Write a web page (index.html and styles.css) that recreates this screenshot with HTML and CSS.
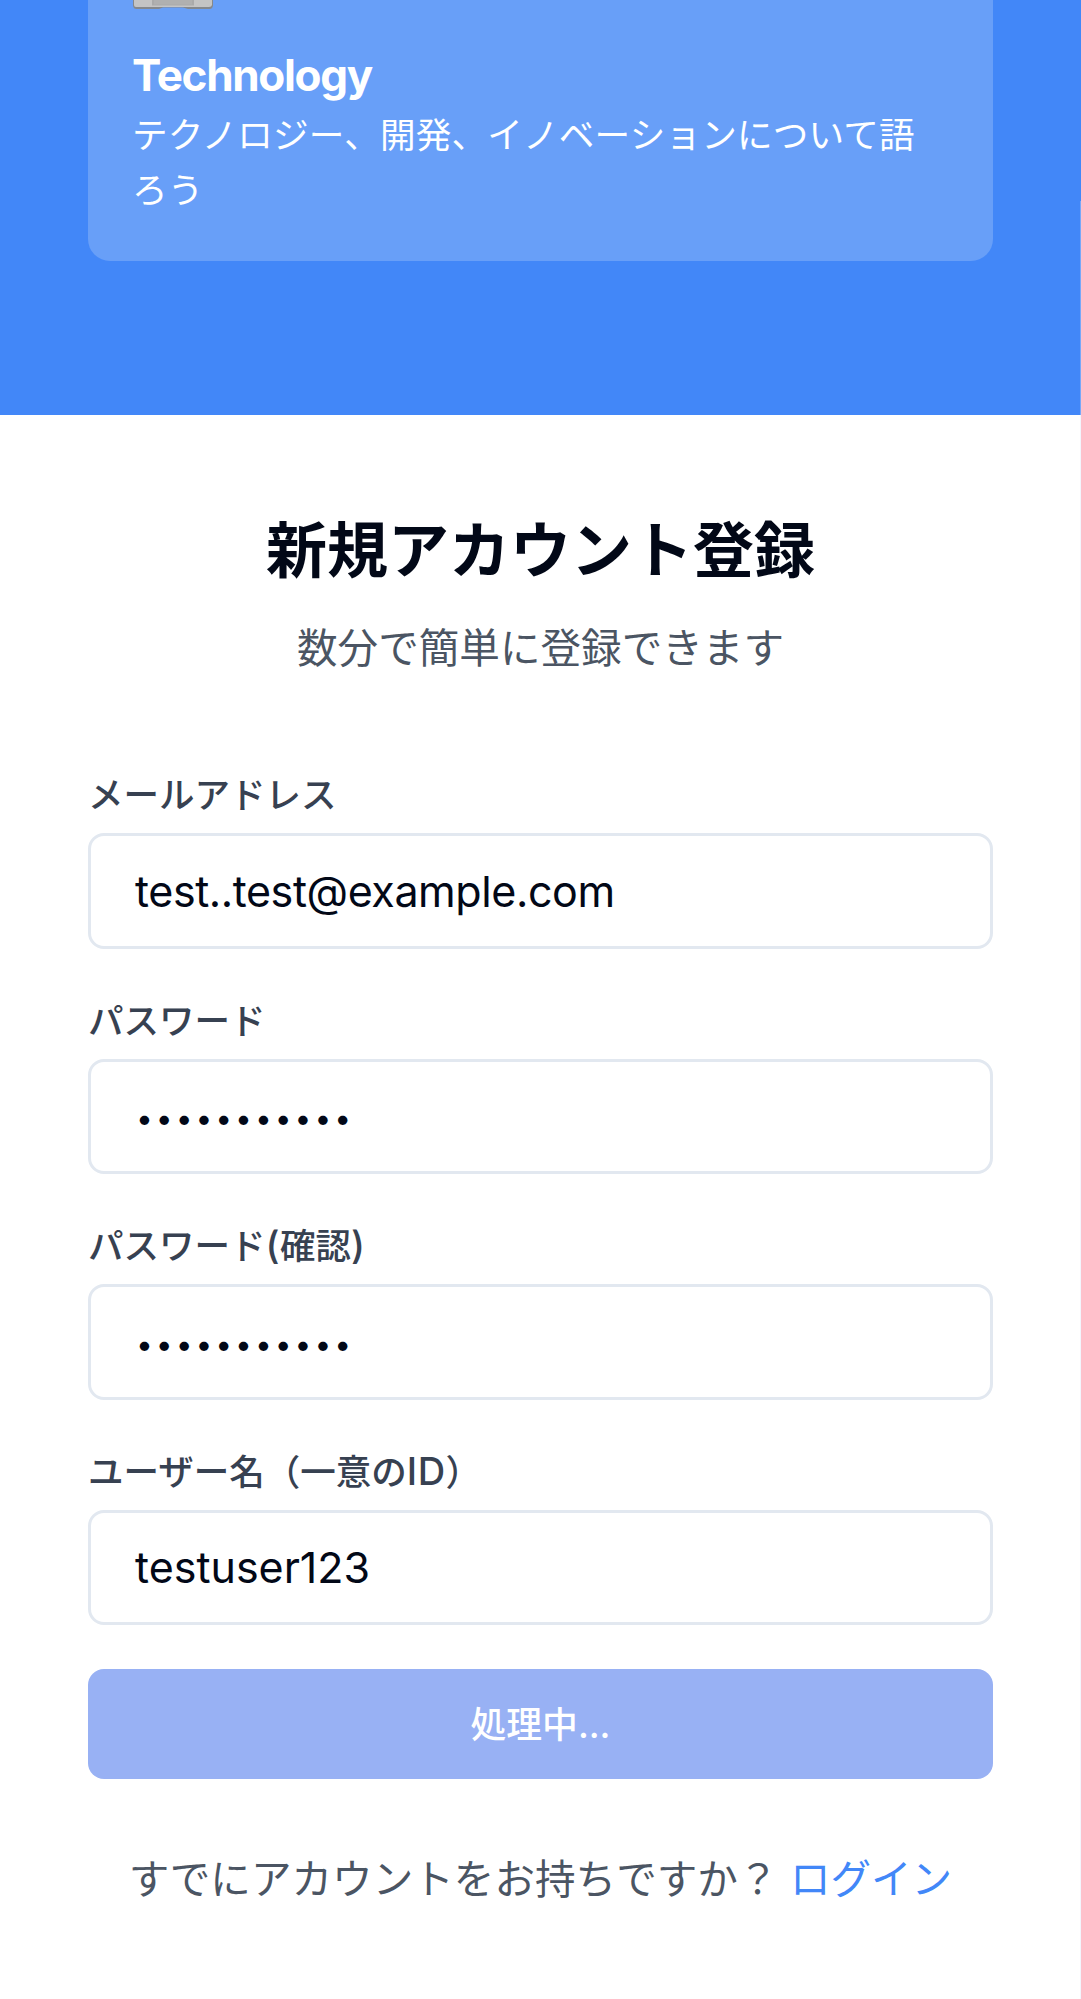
FILE: index.html
```html
<!DOCTYPE html>
<html lang="ja">
<head>
<meta charset="utf-8">
<title>新規アカウント登録</title>
<link rel="stylesheet" href="styles.css">
</head>
<body>
<div class="scroll-edge"></div>
<section class="hero">
  <article class="topic">
    <svg class="topic-icon" viewBox="0 0 80 9" aria-hidden="true">
      <path d="M0 0H80V5.500Q79.500 9 76.500 9H55L50 7.500H30L26 9H3.500Q.5 9 0 5.500Z" fill="#85888c"/>
      <path d="M1 0H79V5Q78.500 7 76 7H3Q1 7 1 5Z" fill="#c4c4c4"/>
      <path d="M19 0H61V5.500H19Z" fill="#aaa"/>
      <path d="M21 0H59V4.500H21Z" fill="#b0b0b0"/>
    </svg>
    <h2 class="topic-title"><span>Technology</span></h2>
    <p class="topic-text">テクノロジー、開発、イノベーションについて語ろう</p>
  </article>
</section>
<main class="signup">
  <h1 class="title">新規アカウント登録</h1>
  <p class="subtitle">数分で簡単に登録できます</p>
  <form class="form">
    <div class="field"><div class="label">メールアドレス</div><div class="input email"><span>test..test@example.com</span></div></div>
    <div class="field"><div class="label">パスワード</div><div class="input dots"><span>•••••••••••</span></div></div>
    <div class="field"><div class="label">パスワード<span class="latin">(</span>確認<span class="latin">)</span></div><div class="input dots"><span>•••••••••••</span></div></div>
    <div class="field"><div class="label">ユーザー名（一意の<span class="latin">ID</span>）</div><div class="input"><span>testuser123</span></div></div>
    <button class="submit" type="button">処理中...</button>
  </form>
  <p class="login">すでにアカウントをお持ちですか？ <a class="link">ログイン</a></p>
</main>
</body>
</html>
```
FILE: styles.css
```css
* { box-sizing: border-box; margin: 0; }
body {
  font-family: Inter, "Noto Sans CJK JP", sans-serif;
  color: #020817;
  background: #fff;
}
.scroll-edge {
  position: absolute;
  top: 201px;
  right: 0;
  width: 1px;
  height: 1798px;
  background: rgba(220, 230, 250, .35);
}
.hero { height: 415px; padding: 0 88px; background: #4287f8; }
.topic {
  height: 261px;
  padding: 0 70px 0 45px;
  border-radius: 0 0 22px 22px;
  background: #689ff8;
  color: #fff;
}
.topic-icon { display: block; width: 80px; height: 9px; }
.topic-title { margin: 37px 0 0 -1px; font-size: 44px; line-height: 58px; font-weight: 700; letter-spacing: -1.3px; }
.topic-text { margin: 4px -10px 0 -1px; font-size: 35.600px; line-height: 55px; letter-spacing: .2px; }
.signup { padding: 98px 88px 0; }
.title { text-align: center; font-size: 61px; line-height: 76px; font-weight: 700; }
.subtitle { margin-top: 29px; text-align: center; font-size: 40.600px; line-height: 61px; color: #4b5563; }
.form { display: flex; flex-direction: column; margin-top: 90px; }
.field { height: 225.500px; }
.label { height: 64px; font-size: 35.500px; line-height: 53px; font-weight: 500; color: #374151; }
.latin { font-size: 38px; line-height: 1; letter-spacing: .5px; }
.input {
  display: flex;
  align-items: center;
  height: 115.500px;
  padding: 0 44px;
  border: 3px solid #e2e8f0;
  border-radius: 16px;
  font-size: 43px;
}
.email { letter-spacing: -.42px; }
.dots { padding: 4px 0 0 45px; font-size: 30px; letter-spacing: 2.950px; }
.submit {
  height: 110px;
  margin-top: -2px;
  padding: 0 0 4px;
  border: 0;
  border-radius: 16px;
  background: #98b1f4;
  color: #fff;
  font: inherit;
  font-size: 35.800px;
  font-weight: 500;
}
.login { margin-top: 70px; text-align: center; font-size: 40.600px; line-height: 61px; color: #4b5563; white-space: nowrap; }
.link { color: #4287f8; }
```
